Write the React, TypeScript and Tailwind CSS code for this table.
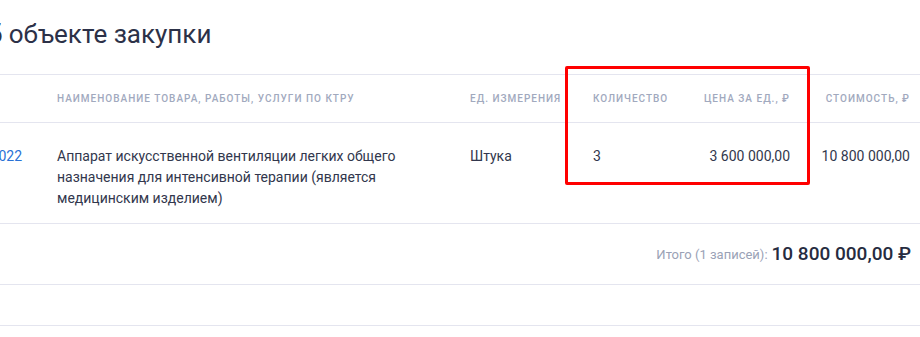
import React from 'react';

interface Item {
  code: string;
  name: string;
  unit: string;
  qty: string;
  price: string;
  cost: string;
}

const items: Item[] = [
  {
    code: '26.60.12.119-00000022',
    name: 'Аппарат искусственной вентиляции легких общего назначения для интенсивной терапии (является медицинским изделием)',
    unit: 'Штука',
    qty: '3',
    price: '3 600 000,00',
    cost: '10 800 000,00',
  },
];

const cols = 'grid grid-cols-[45px_413px_123px_109px_112px_120px]';

export default function App() {
  return (
    <div className="relative w-[920px] h-[337px] overflow-hidden bg-white font-['Roboto',sans-serif]">
      <h2 className="ml-[-30px] mt-[19px] h-[31px] text-[26px] leading-[31px] font-normal text-[#2c3148] whitespace-nowrap">
        Об объекте закупки
      </h2>

      <div className="mt-[24px] w-[922px]">
        {/* header */}
        <div className={`${cols} h-[49px] items-center border-y border-[#e4e5ef] text-[10px] font-medium tracking-[1px] uppercase text-[#a1a9be]`}>
          <div />
          <div className="px-3">Наименование товара, работы, услуги по КТРУ</div>
          <div className="px-3 whitespace-nowrap">Ед. измерения</div>
          <div className="px-3">Количество</div>
          <div className="px-3 text-right whitespace-nowrap">Цена за ед., ₽</div>
          <div className="px-3 text-right whitespace-nowrap">Стоимость, ₽</div>
        </div>

        {/* rows */}
        {items.map((it) => (
          <div key={it.code} className={`${cols} h-[101px] border-b border-[#e4e5ef] pt-[23px] text-[14px] leading-[21px] text-[#32374d]`}>
            <div className="flex justify-end pr-[23px] whitespace-nowrap text-[#2a72d6]">{it.code}</div>
            <div className="px-3 pr-[50px]">{it.name}</div>
            <div className="px-3">{it.unit}</div>
            <div className="px-3">{it.qty}</div>
            <div className="px-3 text-right whitespace-nowrap">{it.price}</div>
            <div className="px-3 text-right whitespace-nowrap">{it.cost}</div>
          </div>
        ))}

        {/* total */}
        <div className="flex h-[61px] items-center justify-end border-b border-[#e4e5ef] pr-[11px] pt-[1px]">
          <span className="text-[13px] text-[#9aa2b6]">Итого (1 записей):</span>
          <span className="ml-[4px] text-[19px] font-medium text-[#262b40]">10 800 000,00 ₽</span>
        </div>
        <div className="h-[41px] border-b border-[#e4e5ef]" />
      </div>

      {/* highlight frame */}
      <div className="absolute left-[565px] top-[66px] w-[245px] h-[119px] border-[3px] border-[#ff0000] rounded-[2px] pointer-events-none" />
    </div>
  );
}
